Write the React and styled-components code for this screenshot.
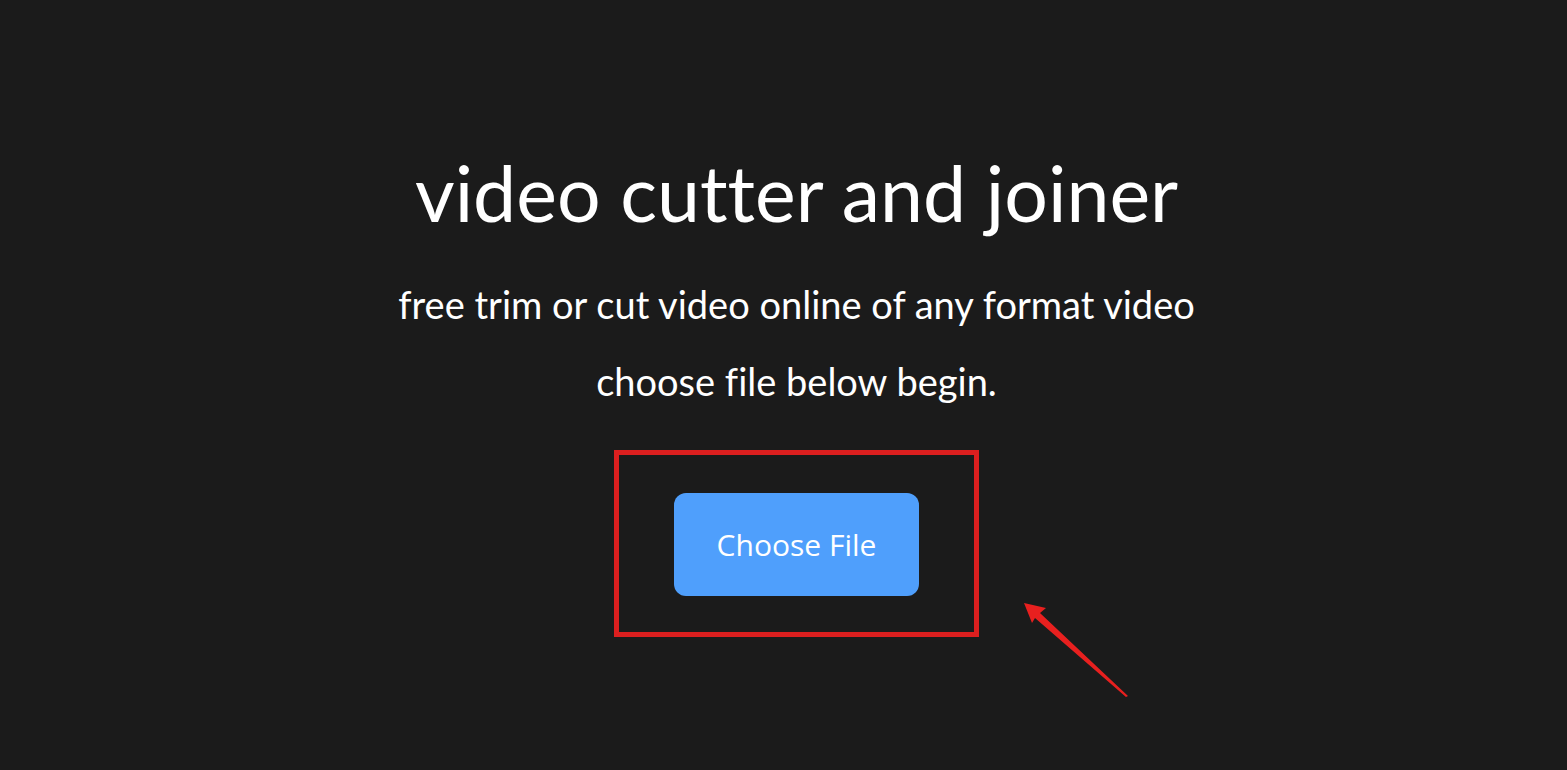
import React from "react";
import styled, { createGlobalStyle } from "styled-components";

const Global = createGlobalStyle`
  html, body { margin: 0; padding: 0; background: #1b1b1b; }
  body { font-family: "Lato", "Open Sans", sans-serif; font-variant-ligatures: none; }
`;

const Page = styled.main`
  position: relative;
  min-height: 770px;
  box-sizing: border-box;
  background: #1b1b1b;
  color: #ffffff;
  display: flex;
  flex-direction: column;
  align-items: center;
  padding: 147px 0 0 26px;
  overflow: hidden;
`;

const Title = styled.h1`
  margin: 0;
  font-family: "Lato", sans-serif;
  font-weight: 400;
  font-size: 77px;
  line-height: 90px;
  letter-spacing: 0;
  font-variant-ligatures: none;
  font-feature-settings: "liga" 0, "clig" 0;
`;

const Subtitle = styled.p`
  margin: 29px 0 0;
  font-family: "Lato", sans-serif;
  font-weight: 400;
  font-size: 38px;
  line-height: 77px;
  text-align: center;
  font-variant-ligatures: none;
  font-feature-settings: "liga" 0, "clig" 0;
`;

const Highlight = styled.div`
  margin-top: 30px;
  width: 365px;
  height: 187px;
  box-sizing: border-box;
  border: 5px solid #dc1f1f;
  display: flex;
  align-items: flex-start;
  justify-content: center;
  padding-top: 38px;
`;

const ChooseButton = styled.button`
  width: 245px;
  height: 103px;
  border: none;
  border-radius: 12px;
  background: #4f9ffc;
  color: #ffffff;
  font-family: "Open Sans", sans-serif;
  font-size: 30px;
  cursor: pointer;
`;

const Arrow = styled.svg`
  position: absolute;
  left: 1010px;
  top: 590px;
  width: 130px;
  height: 120px;
`;

export default function App() {
  return (
    <>
      <Global />
      <Page>
        <Title>video cutter and joiner</Title>
        <Subtitle>
          free trim or cut video online of any format video
          <br />
          choose file below begin.
        </Subtitle>
        <Highlight>
          <ChooseButton>Choose File</ChooseButton>
        </Highlight>
        <Arrow viewBox="1010 590 130 120">
          <polygon
            points="1024,603 1046,608 1040,613 1128,696 1126,697 1035,618 1032,623"
            fill="#e8201f"
          />
        </Arrow>
      </Page>
    </>
  );
}
